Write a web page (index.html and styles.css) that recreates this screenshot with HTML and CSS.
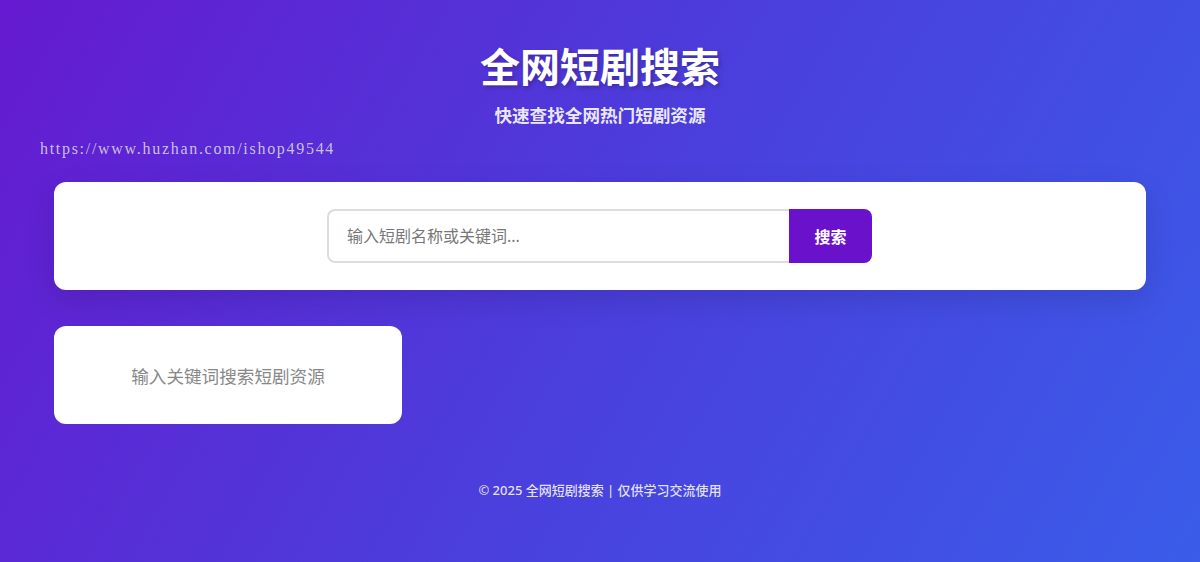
FILE: index.html
```html
<!DOCTYPE html>
<html lang="zh-CN">
<head>
<meta charset="utf-8">
<title>全网短剧搜索</title>
<link rel="stylesheet" href="styles.css">
</head>
<body>
<div class="watermark">https://www.huzhan.com/ishop49544</div>
<div class="container">
  <header class="header">
    <h1 class="title">全网短剧搜索</h1>
    <p class="subtitle">快速查找全网热门短剧资源</p>
  </header>
  <section class="search-card">
    <form class="search-form">
      <input class="search-input" type="text" placeholder="输入短剧名称或关键词...">
      <button class="search-btn" type="button">搜索</button>
    </form>
  </section>
  <section class="results">
    <div class="result-card">输入关键词搜索短剧资源</div>
  </section>
  <footer class="footer">© 2025 全网短剧搜索 | 仅供学习交流使用</footer>
</div>
</body>
</html>
```
FILE: styles.css
```css
html, body {
  margin: 0;
  padding: 0;
}
body {
  min-height: 100vh;
  background: linear-gradient(120deg, #651ad0 0%, #4b3edc 50%, #3a5ce9 100%);
  font-family: "Noto Sans", "Noto Sans CJK SC", sans-serif;
  color: #fff;
  position: relative;
}
.watermark {
  position: absolute;
  left: 40px;
  top: 139px;
  font-family: "Liberation Serif", serif;
  font-size: 16px;
  line-height: 20px;
  letter-spacing: 1.7px;
  color: rgba(215, 210, 228, 0.9);
}
.container {
  max-width: 1092px;
  margin: 0 auto;
  padding-top: 43px;
}
.header {
  text-align: center;
  margin-bottom: 54px;
}
.title {
  margin: 0;
  font-size: 40px;
  line-height: 48px;
  font-weight: 700;
  text-shadow: 2px 2px 4px rgba(0, 0, 0, 0.25);
}
.subtitle {
  margin: 12px 0 0;
  font-size: 17.6px;
  line-height: 25px;
  font-weight: 600;
  color: rgba(255, 255, 255, 0.9);
}
.search-card {
  background: #fff;
  border-radius: 12px;
  padding: 27px 0;
  box-shadow: 0 10px 30px rgba(0, 0, 0, 0.12);
  display: flex;
  justify-content: center;
}
.search-form {
  display: flex;
  width: 545px;
  height: 54px;
  margin-right: 1px;
}
.search-input {
  flex: 1;
  min-width: 0;
  box-sizing: border-box;
  height: 54px;
  border: 2px solid #ddd;
  border-right: none;
  border-radius: 8px 0 0 8px;
  padding: 0 18px;
  font-family: "Noto Sans", "Noto Sans CJK SC", sans-serif;
  font-size: 16px;
  outline: none;
  color: #333;
}
.search-input::placeholder {
  color: #777;
}
.search-btn {
  width: 83px;
  height: 54px;
  border: none;
  border-radius: 0 8px 8px 0;
  background: #6a11cb;
  color: #fff;
  font-family: "Noto Sans", "Noto Sans CJK SC", sans-serif;
  font-size: 16px;
  font-weight: 700;
  cursor: pointer;
}
.results {
  margin-top: 36px;
  display: grid;
  grid-template-columns: repeat(3, 1fr);
  gap: 24px;
}
.result-card {
  background: #fff;
  border-radius: 12px;
  height: 98px;
  display: flex;
  align-items: center;
  justify-content: center;
  font-size: 17.6px;
  color: #888;
}
.footer {
  margin-top: 56px;
  text-align: center;
  font-size: 13px;
  line-height: 20px;
  font-weight: 500;
  color: rgba(255, 255, 255, 0.85);
}
```
